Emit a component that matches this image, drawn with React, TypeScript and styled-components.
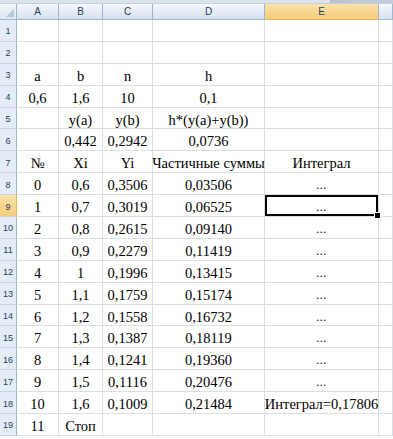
import React from "react";
import styled, { createGlobalStyle, css } from "styled-components";

const Global = createGlobalStyle`
  html, body { margin: 0; padding: 0; background: #ffffff; }
  body { width: 393px; height: 439px; overflow: hidden; }
`;

const Sheet = styled.div`
  width: 393px;
  height: 439px;
  overflow: hidden;
  display: flex;
  flex-direction: column;
  background: #ffffff;
`;

const TopStrip = styled.div`
  height: 3px;
  background: linear-gradient(90deg, #dbe3ec 0%, #dbe3ec 84%, #b8c4d2 84%, #c4ceda 100%);
  border-bottom: 1px solid #c5d1de;
  flex: none;
`;

const Grid = styled.div`
  display: grid;
  grid-template-columns: 17px 42px 44px 50px 112px 114px 1fr;
  grid-template-rows: 16px repeat(19, 21.9px);
`;

const Corner = styled.div`
  background: linear-gradient(180deg, #f1f5fb 0%, #dde6f1 100%);
  border-right: 1px solid #9eb6ce;
  border-bottom: 1px solid #9eb6ce;
  position: relative;
  &::after {
    content: "";
    position: absolute;
    right: 2px;
    bottom: 2px;
    width: 0;
    height: 0;
    border-left: 8px solid transparent;
    border-bottom: 8px solid #b8c8da;
  }
`;

const ColHead = styled.div<{ $active?: boolean }>`
  display: flex;
  align-items: center;
  justify-content: center;
  font-family: "Liberation Sans", Arial, sans-serif;
  font-size: 10px;
  color: #27415f;
  border-right: 1px solid #9eb6ce;
  border-bottom: 1px solid #9eb6ce;
  background: linear-gradient(180deg, #f6f9fd 0%, #e4ebf5 55%, #d9e3ef 100%);
  ${(p) =>
    p.$active &&
    css`
      background: linear-gradient(180deg, #fbe2a8 0%, #f9d58e 55%, #f7cc7a 100%);
      border-bottom-color: #f2b04a;
    `}
`;

const RowHead = styled.div<{ $active?: boolean }>`
  display: flex;
  align-items: center;
  justify-content: center;
  padding-top: 2px;
  box-sizing: border-box;
  font-family: "Liberation Sans", Arial, sans-serif;
  font-size: 9px;
  color: #27415f;
  border-right: 1px solid #9eb6ce;
  border-bottom: 1px solid #c5d4e4;
  background: #e4ecf7;
  ${(p) =>
    p.$active &&
    css`
      background: linear-gradient(180deg, #fbe2a8 0%, #f7cc7a 100%);
      border-right-color: #f2b04a;
    `}
`;

const Cell = styled.div<{ $selected?: boolean }>`
  position: relative;
  display: flex;
  align-items: center;
  justify-content: center;
  padding-top: 4px;
  box-sizing: border-box;
  font-family: "Liberation Serif", "Times New Roman", serif;
  font-size: 14.5px;
  color: #000000;
  white-space: nowrap;
  overflow: visible;
  border-right: 1px solid #dadfe6;
  border-bottom: 1px solid #dadfe6;
  ${(p) =>
    p.$selected &&
    css`
      box-shadow: inset 0 0 0 2px #000000;
      &::after {
        content: "";
        position: absolute;
        right: -3px;
        bottom: -3px;
        width: 5px;
        height: 5px;
        background: #000000;
        border: 1px solid #ffffff;
        z-index: 2;
      }
    `}
`;

const Dots = styled.span`
  font-size: 12px;
  letter-spacing: 0.5px;
`;

const cols = ["A", "B", "C", "D", "E", ""];

type Row = (string | null)[];

const rows: Row[] = [
  ["", "", "", "", "", ""],
  ["", "", "", "", "", ""],
  ["a", "b", "n", "h", "", ""],
  ["0,6", "1,6", "10", "0,1", "", ""],
  ["", "y(a)", "y(b)", "h*(y(a)+y(b))", "", ""],
  ["", "0,442", "0,2942", "0,0736", "", ""],
  ["№", "Xi", "Yi", "Частичные суммы", "Интеграл", ""],
  ["0", "0,6", "0,3506", "0,03506", "…", ""],
  ["1", "0,7", "0,3019", "0,06525", "…", ""],
  ["2", "0,8", "0,2615", "0,09140", "…", ""],
  ["3", "0,9", "0,2279", "0,11419", "…", ""],
  ["4", "1", "0,1996", "0,13415", "…", ""],
  ["5", "1,1", "0,1759", "0,15174", "…", ""],
  ["6", "1,2", "0,1558", "0,16732", "…", ""],
  ["7", "1,3", "0,1387", "0,18119", "…", ""],
  ["8", "1,4", "0,1241", "0,19360", "…", ""],
  ["9", "1,5", "0,1116", "0,20476", "…", ""],
  ["10", "1,6", "0,1009", "0,21484", "Интеграл=0,17806", ""],
  ["11", "Стоп", "", "", "", ""],
];

export default function App() {
  return (
    <Sheet>
      <Global />
      <TopStrip />
      <Grid>
        <Corner />
        {cols.map((c, i) => (
          <ColHead key={`h${i}`} $active={c === "E"}>
            {c}
          </ColHead>
        ))}
        {rows.map((r, ri) => (
          <React.Fragment key={`r${ri}`}>
            <RowHead $active={ri === 8}>{ri + 1}</RowHead>
            {r.map((v, ci) => (
              <Cell key={`c${ri}-${ci}`} $selected={ri === 8 && ci === 4}>
                {v === "…" ? <Dots>...</Dots> : v}
              </Cell>
            ))}
          </React.Fragment>
        ))}
      </Grid>
    </Sheet>
  );
}
